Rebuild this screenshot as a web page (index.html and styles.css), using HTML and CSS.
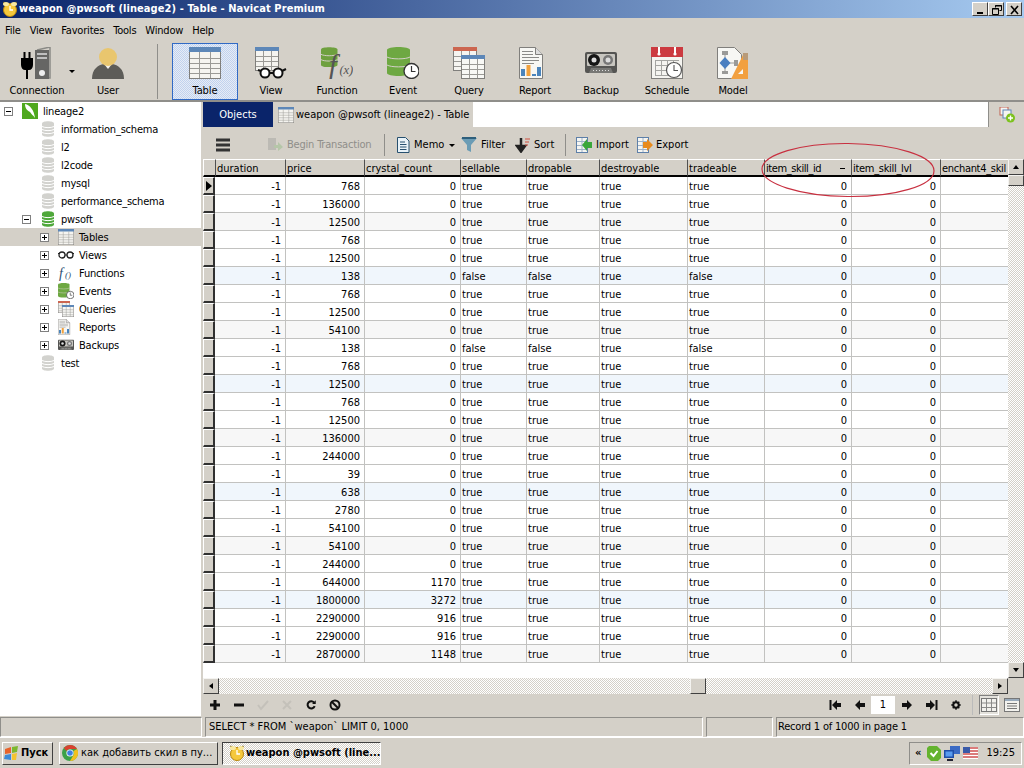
FILE: index.html
```html
<!DOCTYPE html>
<html lang="en">
<head>
<meta charset="utf-8">
<title>weapon @pwsoft (lineage2) - Table - Navicat Premium</title>
<link rel="stylesheet" href="styles.css">
</head>
<body>
<svg class="defs" width="0" height="0" aria-hidden="true">
  <defs>
    <symbol id="i-table" viewBox="0 0 32 32"><rect x=".5" y=".5" width="31" height="31" fill="#f5f4f0" stroke="#807f7c"/><rect x="0" y="0" width="32" height="5" fill="#5d87b8"/><path d="M1 11.5h30M1 16.5h30M1 21.5h30M1 26.5h30M10.5 5v26M21.500 5v26" stroke="#9b9a96" fill="none"/></symbol>
    <symbol id="i-view" viewBox="0 0 32 32"><rect x=".5" y=".5" width="23" height="23" fill="#f5f4f0" stroke="#807f7c"/><rect width="24" height="4" fill="#5d87b8"/><path d="M1 9.500h22M1 14.500h22M1 19.500h22M8.500 4v20M16.500 4v20" stroke="#9b9a96" fill="none"/><circle cx="10" cy="26" r="4.500" fill="#fff" stroke="#111" stroke-width="2"/><circle cx="23" cy="26" r="4.500" fill="#fff" stroke="#111" stroke-width="2"/><path d="M3 23l3 1M14 26h5M27 24l4-2" stroke="#111" stroke-width="2" fill="none"/></symbol>
    <symbol id="i-func" viewBox="0 0 33 32"><path d="M0 2c0-3 17-3 17 0v16c0 3-17 3-17 0z" fill="#6ea03e"/><path d="M0 7c3 2 14 2 17 0M0 12.500c3 2 14 2 17 0" stroke="#d4d0c8" fill="none"/><text x="8" y="28" class="fx">f</text><text x="19" y="27" class="fxs">(x)</text></symbol>
    <symbol id="i-event" viewBox="0 0 32 32"><path d="M0 3c0-4 23-4 23 0v23c0 4-23 4-23 0z" fill="#6ea842"/><path d="M0 10c4 2.500 19 2.500 23 0M0 18c4 2.500 19 2.500 23 0" stroke="#d4d0c8" fill="none"/><circle cx="24.500" cy="24" r="7.500" fill="#fff" stroke="#333" stroke-width="1.300"/><path d="M24.500 19v5.500h4" stroke="#333" fill="none" stroke-width="1.200"/></symbol>
    <symbol id="i-query" viewBox="0 0 32 32"><rect x=".5" y=".5" width="23" height="23" fill="#f5f4f0" stroke="#807f7c"/><rect width="24" height="4" fill="#cc6650"/><path d="M1 9.500h8M1 14.500h8M1 19.500h8M8.500 4v18M16.500 4v4" stroke="#9b9a96"/><rect x="8.500" y="8.500" width="23" height="23" fill="#f8f8f5" stroke="#807f7c"/><rect x="8" y="8" width="24" height="4" fill="#5d87b8"/><path d="M9 17.500h22M9 22.500h22M9 27.500h22M16.500 12v19M24.500 12v19" stroke="#9b9a96" fill="none"/></symbol>
    <symbol id="i-report" viewBox="0 0 32 32"><path d="M.5.500h16l7 7v24H.5z" fill="#f7f7f4" stroke="#807f7c"/><path d="M16.500.5v7h7" fill="#ddd" stroke="#807f7c"/><path d="M3 4.500h11M3 7.500h11M3 10.500h17M3 13.500h17M3 16.500h12" stroke="#8a8a88"/><rect x="2" y="22" width="4" height="7" fill="#4a84bc"/><rect x="7.500" y="18" width="4" height="11" fill="#f2a13c"/><rect x="13" y="27" width="4" height="2" fill="#4a84bc"/><rect x="18" y="20" width="4" height="9" fill="#4a84bc"/></symbol>
    <symbol id="i-backup" viewBox="0 0 32 22"><rect x="0" y="0" width="32" height="21" rx="2" fill="#555553"/><path d="M4 21l2-5h20l2 5z" fill="#787875"/><rect x="2" y="2" width="28" height="12" fill="#c8c6c0" rx="1"/><circle cx="9" cy="8" r="6" fill="#151515"/><circle cx="9" cy="8" r="2.500" fill="#ddd"/><circle cx="23" cy="8" r="5" fill="#777"/><circle cx="23" cy="8" r="2.500" fill="#ddd"/><path d="M8 18.500h16" stroke="#ddd" stroke-dasharray="1 2"/></symbol>
    <symbol id="i-sched" viewBox="0 0 32 32"><rect x=".5" y=".5" width="31" height="31" fill="#f5f4f0" stroke="#807f7c"/><rect width="32" height="10" fill="#cc3a40"/><path d="M8 0v7M24 0v7" stroke="#fff" stroke-width="2"/><circle cx="8" cy="7" r="1.600" fill="#fff"/><circle cx="24" cy="7" r="1.600" fill="#fff"/><path d="M4 13.500h24M4 18.500h24M4 23.500h24M4 28.500h24M4.500 13v16M10.500 13v16M16.500 13v16M22.500 13v16" stroke="#a5a5a2" fill="none"/><circle cx="23" cy="23" r="7.500" fill="#fff" stroke="#555" stroke-width="1.200"/><path d="M23 18v5.500h4" stroke="#555" fill="none" stroke-width="1.100"/></symbol>
    <symbol id="i-model" viewBox="0 0 32 32"><path d="M.5.500h17l7 7v24H.5z" fill="#f7f7f4" stroke="#807f7c"/><rect x="5" y="4" width="6" height="4" fill="#9a9a98"/><rect x="5" y="24" width="6" height="3" fill="#9a9a98"/><rect x="17" y="13" width="4" height="6" fill="#9a9a98"/><path d="M8 8v16M12 16h6" stroke="#9a9a98"/><path d="M8 10l5.500 6-5.500 6-5.500-6z" fill="#4a7fc0"/><path d="M27 6h4v26H14z" fill="#f2a03f"/><path d="M26 22v5h-5z" fill="#f7f7f4"/><rect x="26" y="6" width="5" height="7" fill="#b89a78"/></symbol>
    <symbol id="i-db" viewBox="0 0 16 16"><path d="M2 2.500c0-3 12-3 12 0v11c0 3-12 3-12 0z" fill="currentColor"/><path d="M2 5.500c3 1.500 9 1.500 12 0M2 8.500c3 1.500 9 1.500 12 0M2 11.500c3 1.500 9 1.500 12 0" stroke="#fff" fill="none"/></symbol>
    <symbol id="i-fn" viewBox="0 0 16 16"><text x="1" y="13" class="fxsm">f</text><text x="7" y="13" class="fxxs">()</text></symbol>
    <symbol id="i-sql" viewBox="0 0 16 16"><rect width="16" height="16" fill="#4fa81e"/><path d="M3 1c5 1 9 6 10 14-2-3-4-4-5-6-2-1-5-3-5-8z" fill="#fff"/></symbol>
    <symbol id="i-clock" viewBox="0 0 16 16"><path d="M4 3L1.500 1M12 3l2.500-2" stroke="#6b4e00" stroke-width="1.500"/><circle cx="8" cy="9" r="6.500" fill="#f5c83c" stroke="#b8860b"/><ellipse cx="4" cy="3" rx="3" ry="2" fill="#f8e8a0"/><ellipse cx="12" cy="3" rx="3" ry="2" fill="#f8e8a0"/><path d="M8 5v4h3" stroke="#fff" stroke-width="1.300" fill="none"/></symbol>
    <symbol id="i-memo" viewBox="0 0 16 16"><path d="M2.500.5h8l3.500 3.500v11.500H2.500z" fill="#e8f2f8" stroke="#27506f"/><path d="M5 5h5M5 7.500h6.500M5 10h6.500M5 12.500h6.500" stroke="#27506f"/></symbol>
    <symbol id="i-filter" viewBox="0 0 16 16"><path d="M0 1h16l-6 7v7l-4-2V8z" fill="#6b9cb5"/><path d="M1 1h14" stroke="#2e5f7c" stroke-width="2"/></symbol>
    <symbol id="i-sort" viewBox="0 0 16 16"><path d="M6 1v11M2 9l4 5.500L10 9z" stroke="#222" stroke-width="2.500" fill="#222"/><path d="M10 2h5M10 5h4M10 8h3" stroke="#d05040"/></symbol>
    <symbol id="i-import" viewBox="0 0 16 16"><rect x=".5" y=".5" width="11" height="15" fill="#f5f5f2" stroke="#5d7fa8"/><path d="M1 4.500h10M1 8.500h10M1 12.500h10M6 1v14" stroke="#9fb2c8"/><path d="M16 5v6h-5v3L6 8l5-6v3z" fill="#3aa63a"/></symbol>
    <symbol id="i-export" viewBox="0 0 16 16"><rect x=".5" y=".5" width="11" height="15" fill="#f5f5f2" stroke="#5d7fa8"/><path d="M1 4.500h10M1 8.500h10M1 12.500h10M6 1v14" stroke="#9fb2c8"/><path d="M6 5h4V2l6 6-6 6v-3H6z" fill="#e88a1c"/></symbol>
  </defs>
</svg>

<div class="app">
  <header class="titlebar">
    <svg class="ic16"><use href="#i-clock"/></svg>
    <span class="title-text">weapon @pwsoft (lineage2) - Table - Navicat Premium</span>
    <div class="winbtns">
      <button class="winbtn"><svg width="12" height="10"><rect x="2" y="7" width="6" height="2" fill="#000"/></svg></button>
      <button class="winbtn"><svg width="12" height="10"><path d="M4.500 2.500V.5h6v5H8.500M1.500 3.500h6v6h-6z" fill="none" stroke="#000"/><path d="M4 1h7M1 4h7" stroke="#000"/></svg></button>
      <button class="winbtn winbtn-close"><svg width="12" height="10"><path d="M2 1l7 8M9 1L2 9" stroke="#000" stroke-width="1.600"/></svg></button>
    </div>
  </header>

  <nav class="menubar">
    <span>File</span><span>View</span><span>Favorites</span><span>Tools</span><span>Window</span><span>Help</span>
  </nav>

  <div class="toolbar">
    <div class="tool tool-first">
      <svg class="ic32" viewBox="0 0 32 32"><path d="M16 3l13-3v31h-6" fill="none" stroke="#8a8a86" stroke-width="1.500"/><rect x="14" y="3" width="14" height="29" fill="#666664"/><path d="M16 7h10M16 11h10" stroke="#ddd" stroke-width="1.500"/><circle cx="21" cy="26" r="3" fill="#eee"/><path d="M0 11h12v7c0 3-2 5-4 5H4c-2 0-4-2-4-5z" fill="#000"/><rect x="2.500" y="5" width="2" height="6" fill="#000"/><rect x="7.500" y="5" width="2" height="6" fill="#000"/><rect x="5" y="22" width="2" height="10" fill="#000"/></svg>
      <span>Connection</span>
    </div>
    <i class="tool-arrow"></i>
    <div class="tool">
      <svg class="ic32" viewBox="0 0 32 32"><path d="M0 32c0-10 6-14 12-15h8c6 1 12 5 12 15z" fill="#5d5c58"/><path d="M12 17l4 5 4-5z" fill="#f4f2ea"/><circle cx="16" cy="10" r="9" fill="#e9c66e"/></svg>
      <span>User</span>
    </div>
    <i class="tool-sep"></i>
    <div class="tool tool-active"><svg class="ic32"><use href="#i-table"/></svg><span>Table</span></div>
    <div class="tool"><svg class="ic32"><use href="#i-view"/></svg><span>View</span></div>
    <div class="tool"><svg class="ic32"><use href="#i-func"/></svg><span>Function</span></div>
    <div class="tool"><svg class="ic32"><use href="#i-event"/></svg><span>Event</span></div>
    <div class="tool"><svg class="ic32"><use href="#i-query"/></svg><span>Query</span></div>
    <div class="tool"><svg class="ic32"><use href="#i-report"/></svg><span>Report</span></div>
    <div class="tool"><svg class="ic32"><use href="#i-backup"/></svg><span>Backup</span></div>
    <div class="tool"><svg class="ic32"><use href="#i-sched"/></svg><span>Schedule</span></div>
    <div class="tool"><svg class="ic32"><use href="#i-model"/></svg><span>Model</span></div>
  </div>

  <main class="main">
    <aside class="tree">
      <div class="node n0"><i class="exp minus"></i><svg class="ic16"><use href="#i-sql"/></svg><span>lineage2</span></div>
      <div class="node n1 off"><svg class="ic16"><use href="#i-db"/></svg><span>information_schema</span></div>
      <div class="node n1 off"><svg class="ic16"><use href="#i-db"/></svg><span>l2</span></div>
      <div class="node n1 off"><svg class="ic16"><use href="#i-db"/></svg><span>l2code</span></div>
      <div class="node n1 off"><svg class="ic16"><use href="#i-db"/></svg><span>mysql</span></div>
      <div class="node n1 off"><svg class="ic16"><use href="#i-db"/></svg><span>performance_schema</span></div>
      <div class="node n0b on"><i class="exp minus"></i><svg class="ic16"><use href="#i-db"/></svg><span>pwsoft</span></div>
      <div class="node n2 sel"><i class="exp plus"></i><svg class="ic16"><use href="#i-table"/></svg><span>Tables</span></div>
      <div class="node n2"><i class="exp plus"></i><svg class="ic16" viewBox="0 0 16 16"><circle cx="4" cy="8" r="3" fill="none" stroke="#222" stroke-width="1.300"/><circle cx="12" cy="8" r="3" fill="none" stroke="#222" stroke-width="1.300"/><path d="M7 8h2M0 6l1 1M16 6l-1 1" stroke="#222"/></svg><span>Views</span></div>
      <div class="node n2"><i class="exp plus"></i><svg class="ic16"><use href="#i-fn"/></svg><span>Functions</span></div>
      <div class="node n2"><i class="exp plus"></i><svg class="ic16"><use href="#i-event"/></svg><span>Events</span></div>
      <div class="node n2"><i class="exp plus"></i><svg class="ic16"><use href="#i-query"/></svg><span>Queries</span></div>
      <div class="node n2"><i class="exp plus"></i><svg class="ic16"><use href="#i-report"/></svg><span>Reports</span></div>
      <div class="node n2"><i class="exp plus"></i><svg class="ic16" viewBox="0 0 32 22"><use href="#i-backup"/></svg><span>Backups</span></div>
      <div class="node n1 off"><svg class="ic16"><use href="#i-db"/></svg><span>test</span></div>
    </aside>

    <section class="pane">
      <div class="tabs">
        <div class="tab-objects">Objects</div>
        <div class="tab-doc"><svg class="ic16"><use href="#i-table"/></svg><span>weapon @pwsoft (lineage2) - Table</span></div>
        <div class="tab-fill"></div>
        <div class="tab-add"><svg class="ic16" viewBox="0 0 16 16"><rect x="1" y="0" width="8" height="8" fill="#f5f5f2" stroke="#c06050"/><rect x="4" y="3" width="8" height="8" fill="#f5f5f2" stroke="#5d87b8"/><circle cx="11.500" cy="11" r="4.500" fill="#7cc21e"/><path d="M11.500 8.500v5M9 11h5" stroke="#fff" stroke-width="1.400"/></svg></div>
      </div>

      <div class="subbar">
        <svg class="burger" width="14" height="14" viewBox="0 0 14 14"><path d="M0 2h14M0 7h14M0 12h14" stroke="#333" stroke-width="2.800" stroke-linecap="round"/></svg>
        <div class="sub sub-begin dim"><svg class="ic16" viewBox="0 0 16 16"><rect x="1" y="1" width="8" height="12" fill="#bcbab4"/><path d="M7 8h4V5l5 5-5 4v-3H7z" fill="#b5c6a8"/></svg><span>Begin Transaction</span></div>
        <i class="sub-sep sep-a"></i>
        <div class="sub sub-memo"><svg class="ic16"><use href="#i-memo"/></svg><span>Memo</span><i class="mini-arrow"></i></div>
        <div class="sub sub-filter"><svg class="ic16"><use href="#i-filter"/></svg><span>Filter</span></div>
        <div class="sub sub-sort"><svg class="ic16"><use href="#i-sort"/></svg><span>Sort</span></div>
        <i class="sub-sep sep-b"></i>
        <div class="sub sub-import"><svg class="ic16"><use href="#i-import"/></svg><span>Import</span></div>
        <div class="sub sub-export"><svg class="ic16"><use href="#i-export"/></svg><span>Export</span></div>
      </div>

      <div class="gridarea">
        <div class="gridview">
          <table class="grid">
            <colgroup><col class="c0"><col class="c1"><col class="c2"><col class="c3"><col class="c4"><col class="c5"><col class="c6"><col class="c7"><col class="c8"><col class="c9"><col></colgroup>
            <thead><tr><th class="rh"></th><th>duration</th><th>price</th><th>crystal_count</th><th>sellable</th><th>dropable</th><th>destroyable</th><th>tradeable</th><th class="sorted tight">item_skill_id<i class="sortmark"></i></th><th class="tight2">item_skill_lvl</th><th class="tight2">enchant4_skil</th></tr></thead>
            <tbody>
              <tr><td class="rh"><i class="cursor"></i></td><td class="n">-1</td><td class="n">768</td><td class="n">0</td><td>true</td><td>true</td><td>true</td><td>true</td><td class="n">0</td><td class="n">0</td><td></td></tr>
              <tr><td class="rh"></td><td class="n">-1</td><td class="n">136000</td><td class="n">0</td><td>true</td><td>true</td><td>true</td><td>true</td><td class="n">0</td><td class="n">0</td><td></td></tr>
              <tr class="gray"><td class="rh"></td><td class="n">-1</td><td class="n">12500</td><td class="n">0</td><td>true</td><td>true</td><td>true</td><td>true</td><td class="n">0</td><td class="n">0</td><td></td></tr>
              <tr><td class="rh"></td><td class="n">-1</td><td class="n">768</td><td class="n">0</td><td>true</td><td>true</td><td>true</td><td>true</td><td class="n">0</td><td class="n">0</td><td></td></tr>
              <tr><td class="rh"></td><td class="n">-1</td><td class="n">12500</td><td class="n">0</td><td>true</td><td>true</td><td>true</td><td>true</td><td class="n">0</td><td class="n">0</td><td></td></tr>
              <tr class="blue"><td class="rh"></td><td class="n">-1</td><td class="n">138</td><td class="n">0</td><td>false</td><td>false</td><td>true</td><td>false</td><td class="n">0</td><td class="n">0</td><td></td></tr>
              <tr><td class="rh"></td><td class="n">-1</td><td class="n">768</td><td class="n">0</td><td>true</td><td>true</td><td>true</td><td>true</td><td class="n">0</td><td class="n">0</td><td></td></tr>
              <tr><td class="rh"></td><td class="n">-1</td><td class="n">12500</td><td class="n">0</td><td>true</td><td>true</td><td>true</td><td>true</td><td class="n">0</td><td class="n">0</td><td></td></tr>
              <tr class="gray"><td class="rh"></td><td class="n">-1</td><td class="n">54100</td><td class="n">0</td><td>true</td><td>true</td><td>true</td><td>true</td><td class="n">0</td><td class="n">0</td><td></td></tr>
              <tr><td class="rh"></td><td class="n">-1</td><td class="n">138</td><td class="n">0</td><td>false</td><td>false</td><td>true</td><td>false</td><td class="n">0</td><td class="n">0</td><td></td></tr>
              <tr><td class="rh"></td><td class="n">-1</td><td class="n">768</td><td class="n">0</td><td>true</td><td>true</td><td>true</td><td>true</td><td class="n">0</td><td class="n">0</td><td></td></tr>
              <tr class="blue"><td class="rh"></td><td class="n">-1</td><td class="n">12500</td><td class="n">0</td><td>true</td><td>true</td><td>true</td><td>true</td><td class="n">0</td><td class="n">0</td><td></td></tr>
              <tr><td class="rh"></td><td class="n">-1</td><td class="n">768</td><td class="n">0</td><td>true</td><td>true</td><td>true</td><td>true</td><td class="n">0</td><td class="n">0</td><td></td></tr>
              <tr><td class="rh"></td><td class="n">-1</td><td class="n">12500</td><td class="n">0</td><td>true</td><td>true</td><td>true</td><td>true</td><td class="n">0</td><td class="n">0</td><td></td></tr>
              <tr class="gray"><td class="rh"></td><td class="n">-1</td><td class="n">136000</td><td class="n">0</td><td>true</td><td>true</td><td>true</td><td>true</td><td class="n">0</td><td class="n">0</td><td></td></tr>
              <tr><td class="rh"></td><td class="n">-1</td><td class="n">244000</td><td class="n">0</td><td>true</td><td>true</td><td>true</td><td>true</td><td class="n">0</td><td class="n">0</td><td></td></tr>
              <tr><td class="rh"></td><td class="n">-1</td><td class="n">39</td><td class="n">0</td><td>true</td><td>true</td><td>true</td><td>true</td><td class="n">0</td><td class="n">0</td><td></td></tr>
              <tr class="blue"><td class="rh"></td><td class="n">-1</td><td class="n">638</td><td class="n">0</td><td>true</td><td>true</td><td>true</td><td>true</td><td class="n">0</td><td class="n">0</td><td></td></tr>
              <tr><td class="rh"></td><td class="n">-1</td><td class="n">2780</td><td class="n">0</td><td>true</td><td>true</td><td>true</td><td>true</td><td class="n">0</td><td class="n">0</td><td></td></tr>
              <tr><td class="rh"></td><td class="n">-1</td><td class="n">54100</td><td class="n">0</td><td>true</td><td>true</td><td>true</td><td>true</td><td class="n">0</td><td class="n">0</td><td></td></tr>
              <tr class="gray"><td class="rh"></td><td class="n">-1</td><td class="n">54100</td><td class="n">0</td><td>true</td><td>true</td><td>true</td><td>true</td><td class="n">0</td><td class="n">0</td><td></td></tr>
              <tr><td class="rh"></td><td class="n">-1</td><td class="n">244000</td><td class="n">0</td><td>true</td><td>true</td><td>true</td><td>true</td><td class="n">0</td><td class="n">0</td><td></td></tr>
              <tr><td class="rh"></td><td class="n">-1</td><td class="n">644000</td><td class="n">1170</td><td>true</td><td>true</td><td>true</td><td>true</td><td class="n">0</td><td class="n">0</td><td></td></tr>
              <tr class="blue"><td class="rh"></td><td class="n">-1</td><td class="n">1800000</td><td class="n">3272</td><td>true</td><td>true</td><td>true</td><td>true</td><td class="n">0</td><td class="n">0</td><td></td></tr>
              <tr><td class="rh"></td><td class="n">-1</td><td class="n">2290000</td><td class="n">916</td><td>true</td><td>true</td><td>true</td><td>true</td><td class="n">0</td><td class="n">0</td><td></td></tr>
              <tr><td class="rh"></td><td class="n">-1</td><td class="n">2290000</td><td class="n">916</td><td>true</td><td>true</td><td>true</td><td>true</td><td class="n">0</td><td class="n">0</td><td></td></tr>
              <tr class="gray"><td class="rh"></td><td class="n">-1</td><td class="n">2870000</td><td class="n">1148</td><td>true</td><td>true</td><td>true</td><td>true</td><td class="n">0</td><td class="n">0</td><td></td></tr>
            </tbody>
          </table>
          <svg class="ellipse" width="190" height="70" viewBox="0 0 190 70"><ellipse cx="93" cy="35" rx="86" ry="26.500" transform="rotate(0.600 93 35)" fill="none" stroke="#c83040" stroke-width="1.200"/></svg>
        </div>
        <div class="vscroll">
          <button class="sbtn"><i class="tri tri-up"></i></button>
          <div class="vthumb"></div>
          <div class="track"></div>
          <button class="sbtn"><i class="tri tri-down"></i></button>
        </div>
        <div class="hscroll">
          <button class="sbtn"><i class="tri tri-left"></i></button>
          <div class="track htrack-a"></div>
          <div class="hthumb"></div>
          <div class="track htrack-b"></div>
          <button class="sbtn"><i class="tri tri-right"></i></button>
        </div>
      </div>

      <div class="navbar">
        <div class="nav-left">
          <svg width="16" height="16" viewBox="0 0 16 16"><path d="M8 3v10M3 8h10" stroke="#111" stroke-width="3"/></svg>
          <svg width="16" height="16" viewBox="0 0 16 16"><path d="M3 8h10" stroke="#111" stroke-width="3"/></svg>
          <svg width="16" height="16" viewBox="0 0 16 16"><path d="M3 8l3 4 7-8" stroke="#c4c1ba" stroke-width="2" fill="none"/></svg>
          <svg width="16" height="16" viewBox="0 0 16 16"><path d="M4 4l8 8M12 4l-8 8" stroke="#c4c1ba" stroke-width="2"/></svg>
          <svg width="16" height="16" viewBox="-3 -3 22 22"><path d="M12.500 5A5 5 0 1 0 13 9.500" fill="none" stroke="#111" stroke-width="2.800"/><path d="M9.500 6.500h5v-5z" fill="#111"/></svg>
          <svg width="16" height="16" viewBox="0 0 16 16"><circle cx="8" cy="8" r="4.500" fill="none" stroke="#111" stroke-width="2"/><path d="M5 5l6 6" stroke="#111" stroke-width="2"/></svg>
        </div>
        <div class="nav-right">
          <svg width="16" height="16" viewBox="0 0 16 16"><path d="M3.500 3v10" stroke="#111" stroke-width="2"/><path d="M5 8l5-5v3h4v4h-4v3z" fill="#111"/></svg>
          <svg width="16" height="16" viewBox="0 0 16 16"><path d="M3 8l5-5v3h5v4H8v3z" fill="#111"/></svg>
          <div class="pageinput">1</div>
          <svg width="16" height="16" viewBox="0 0 16 16"><path d="M13 8L8 3v3H3v4h5v3z" fill="#111"/></svg>
          <svg width="16" height="16" viewBox="0 0 16 16"><path d="M12.500 3v10" stroke="#111" stroke-width="2"/><path d="M11 8L6 3v3H2v4h4v3z" fill="#111"/></svg>
          <svg width="16" height="16" viewBox="-3 -3 22 22"><circle cx="8" cy="8" r="3.800" fill="none" stroke="#111" stroke-width="2.800"/><path d="M8 1.500v3M8 11.500v3M1.500 8h3M11.500 8h3M3.500 3.500l2 2M10.500 10.500l2 2M3.500 12.500l2-2M10.500 5.500l2-2" stroke="#111" stroke-width="2"/></svg>
          <i class="nav-sep"></i>
          <div class="viewbtn viewbtn-on"><svg width="16" height="14" viewBox="0 0 16 14"><rect x=".5" y=".5" width="15" height="13" fill="#f2f1ed" stroke="#777"/><path d="M1 5h14M1 9.500h14M5.500 1v12M10.500 1v12" stroke="#8a8a88"/></svg></div>
          <div class="viewbtn"><svg width="16" height="14" viewBox="0 0 16 14"><rect x=".5" y=".5" width="15" height="13" fill="#f2f1ed" stroke="#777"/><rect x="1" y="1" width="14" height="2" fill="#9ab"/><path d="M3 5.500h10M3 8h10M3 10.500h10" stroke="#777"/></svg></div>
        </div>
      </div>
    </section>
  </main>

  <footer class="status">
    <div class="st st-a"></div>
    <div class="st st-b">SELECT * FROM `weapon` LIMIT 0, 1000</div>
    <div class="st st-c"></div>
    <div class="st st-d">Record 1 of 1000 in page 1</div>
  </footer>

  <div class="taskbar">
    <button class="start">
      <svg class="ic16" viewBox="0 0 16 16"><path d="M1 4l6-2v6l-6 1z" fill="#e8622a"/><path d="M8 2l6-1-1 6-5 1z" fill="#7cb82f"/><path d="M1 10l6-1v6l-7-1z" fill="#3c8ad8"/><path d="M8 9l5-1-1 7-4 0z" fill="#f4c430"/></svg>
      <span>Пуск</span>
    </button>
    <button class="task task-chrome">
      <svg class="ic16" viewBox="0 0 16 16"><circle cx="8" cy="8" r="8" fill="#3da14a"/><path d="M8 0a8 8 0 0 1 7 4H8a4 4 0 0 0-3.500 2L1.800 3A8 8 0 0 1 8 0z" fill="#d9412f"/><path d="M15 4a8 8 0 0 1-7 12l3.500-6A4 4 0 0 0 11.500 6z" fill="#f2c01e"/><circle cx="8" cy="8" r="3.600" fill="#fff"/><circle cx="8" cy="8" r="2.800" fill="#3f7fe0"/></svg>
      <span class="task-label">как добавить скил в пу...</span>
    </button>
    <button class="task task-on">
      <svg class="ic16"><use href="#i-clock"/></svg>
      <span class="task-label">weapon @pwsoft (line...</span>
    </button>
    <div class="tray">
      <span class="tray-chev">«</span>
      <svg class="ic16" viewBox="0 0 16 16"><path d="M3 1h8l4 4v8l-3 3H5l-4-4V3z" fill="#63b32e"/><path d="M4.500 8l3 3 4-5" stroke="#fff" stroke-width="2" fill="none"/></svg>
      <svg class="ic16" viewBox="0 0 16 16"><rect x="6" y="1" width="10" height="8" fill="#3c6bc4"/><rect x="0" y="5" width="10" height="8" fill="#1f4ea8"/><rect x="1.500" y="6.500" width="7" height="5" fill="#5a9cf0"/><path d="M3 15h6" stroke="#223" stroke-width="2"/></svg>
      <svg class="ic16" viewBox="0 0 16 16"><rect x="1" y="2" width="15" height="12" fill="#fff"/><path d="M1 3h15M1 6h15M1 9h15M1 12h15" stroke="#d05050" stroke-width="1.400"/><rect x="1" y="2" width="7" height="6" fill="#3a5aa8"/></svg>
      <span class="clock">19:25</span>
    </div>
  </div>
</div>
</body>
</html>
```

FILE: styles.css
```css
* { box-sizing: border-box; }
html, body { margin: 0; padding: 0; }
body {
  width: 1024px;
  height: 768px;
  overflow: hidden;
  background: #d4d0c8;
  color: #000;
  font: 11px/14px "DejaVu Sans Condensed", "DejaVu Sans", sans-serif;
}
.defs { position: absolute; }
.app { display: flex; flex-direction: column; height: 768px; }
svg { display: block; flex: none; }
.ic16 { width: 16px; height: 16px; }
.ic32 { width: 32px; height: 32px; }
.fx { font: italic 30px "Liberation Serif", serif; fill: #555; }
.fxs { font: italic 13px "Liberation Serif", serif; fill: #555; }
.fxsm { font: italic 14px "Liberation Serif", serif; fill: #2a4e70; }
.fxxs { font: italic 9px "Liberation Serif", serif; fill: #2a4e70; }

/* title */
.titlebar {
  flex: none;
  height: 18px;
  display: flex;
  align-items: center;
  padding: 0 2px;
  gap: 1px;
  background: linear-gradient(90deg, #0a246a, #a6caf0);
}
.title-text { color: #fff; font-weight: bold; letter-spacing: 0.08px; }
.winbtns { margin-left: auto; display: flex; }
.winbtn {
  width: 16px;
  height: 14px;
  padding: 1px 0 0 1px;
  background: #d4d0c8;
  border: 1px solid;
  border-color: #fff #404040 #404040 #fff;
  display: flex;
  align-items: center;
  justify-content: center;
}
.winbtn-close { margin-left: 2px; }

/* menu */
.menubar {
  flex: none;
  height: 25px;
  display: flex;
  align-items: center;
  padding: 1px 0 0 5px;
  gap: 9px;
  letter-spacing: -0.2px;
}

/* toolbar */
.toolbar {
  flex: none;
  height: 59px;
  display: flex;
  align-items: flex-start;
  padding-left: 4px;
  border-bottom: 2px solid #8f8e8a;
}
.tool {
  width: 66px;
  height: 57px;
  display: flex;
  flex-direction: column;
  align-items: center;
  padding-top: 4px;
  gap: 5px;
  border: 1px solid transparent;
  letter-spacing: -0.1px;
}
.tool svg { margin-top: -1px; }
.tool-arrow {
  width: 0;
  height: 0;
  flex: none;
  margin: 27px 0 0 -1px;
  border: 3px solid transparent;
  border-top: 3px solid #000;
  border-bottom: 0;
}
.tool-sep {
  width: 1px;
  height: 55px;
  margin: 1px 14px 0 16px;
  background: #8f8e8a;
  flex: none;
}
.tool-active {
  border-color: #316ac5;
  background: repeating-conic-gradient(#c1d2ee 0 25%, #e6ecf6 0 50%) 0 0 / 2px 2px;
}

/* main */
.main { flex: 1; min-height: 0; display: flex; }
.tree {
  width: 201px;
  flex: none;
  background: #fff;
}
.node { height: 18px; display: flex; align-items: center; white-space: nowrap; }
.node span { margin-left: 5px; padding-top: 2px; letter-spacing: -0.2px; }
.n0 { padding-left: 4px; }
.n0b { padding-left: 22px; }
.n1 { padding-left: 40px; }
.n2 { padding-left: 40px; }
.sel { background: #d4d0c8; }
.off .ic16 { color: #d2d2ce; }
.on .ic16 { color: #4fa83a; }
.exp {
  position: relative;
  width: 9px;
  height: 9px;
  flex: none;
  margin-right: 9px;
  border: 1px solid #808080;
  background: #fff;
}
.exp::before {
  content: "";
  position: absolute;
  left: 1px; right: 1px; top: 3px;
  height: 1px;
  background: #000;
}
.plus::after {
  content: "";
  position: absolute;
  top: 1px; bottom: 1px; left: 3px;
  width: 1px;
  background: #000;
}

.pane { flex: 1; min-width: 0; margin-left: 2px; display: flex; flex-direction: column; }
.tabs { flex: none; height: 26px; display: flex; }
.tab-objects {
  width: 70px;
  height: 25px;
  background: #0a246a;
  color: #fff;
  display: flex;
  align-items: center;
  justify-content: center;
}
.tab-doc { width: 200px; display: flex; align-items: center; padding-left: 5px; gap: 2px; height: 25px; white-space: nowrap; }
.tab-fill { flex: 1; height: 25px; background: #fff; }
.tab-add {
  width: 36px;
  height: 25px;
  border-left: 1px solid #8f8e8a;
  display: flex;
  align-items: center;
  justify-content: center;
}

/* second toolbar */
.subbar { flex: none; height: 31px; display: flex; align-items: center; padding-top: 3px; }
.burger { margin-left: 13px; }
.sub { display: flex; align-items: center; gap: 4px; white-space: nowrap; flex: none; }
.dim { color: #8f8e8a; letter-spacing: -0.2px; }
.sub-begin { margin-left: 37px; width: 117px; }
.sub-sep { width: 1px; height: 22px; background: #8f8e8a; flex: none; }
.sep-a { margin: 0 10px 0 0; }
.sub-memo { width: 66px; gap: 3px; }
.mini-arrow { width: 0; height: 0; margin-left: auto; margin-right: 6px; border: 3px solid transparent; border-top-color: #000; border-bottom: 0; }
.sub-filter { width: 54px; gap: 4px; }
.sub-sort { width: 50px; gap: 3px; }
.sep-b { margin: 0 10px 0 0; }
.sub-import { width: 61px; gap: 4px; }
.sub-export { gap: 3px; }

/* grid */
.gridarea {
  flex: 1;
  min-height: 0;
  display: grid;
  grid-template-columns: 1fr 16px;
  grid-template-rows: 1fr 16px;
  background: #fff;
}
.gridview { position: relative; min-width: 0; min-height: 0; }
.grid {
  table-layout: fixed;
  border-collapse: separate;
  border-spacing: 0;
  width: 805px;
}
.c0 { width: 12px; }
.c1 { width: 70px; }
.c2 { width: 79px; }
.c3 { width: 96px; }
.c4 { width: 66px; }
.c5 { width: 73px; }
.c6 { width: 88px; }
.c7 { width: 77px; }
.c8 { width: 87px; }
.c9 { width: 89px; }
.grid th, .grid td {
  height: 18px;
  overflow: hidden;
  white-space: nowrap;
  font-weight: normal;
  text-align: left;
}
.grid th {
  background: #d4d0c8;
  border-top: 1px solid #fff;
  border-left: 1px solid #505050;
  border-bottom: 2px solid #000;
  padding: 3px 0 0 1px;
  line-height: 12px;
}
.grid .tight { letter-spacing: -0.4px; }
.grid .tight2 { letter-spacing: -0.3px; }
.grid td {
  border-left: 1px solid #c2c2c0;
  border-bottom: 1px solid #c2c2c0;
  padding: 2px 2px 0 1px;
}
.grid th.rh { border-left: 1px solid #fff; background: #d4d0c8; padding: 0; }
.grid td.rh {
  background: #d4d0c8;
  border-top: 1px solid #fff;
  border-left: 1px solid #fff;
  border-right: 2px solid #303030;
  border-bottom: 2px solid #303030;
  padding: 0;
  position: relative;
}
.grid td.rh + td { border-left: 0; }
.grid td.n { text-align: right; padding-right: 4px; }
.gray td { background: #f7f7f7; }
.blue td { background: #f0f6fc; }
.sorted { position: relative; }
.sortmark { position: absolute; right: 6px; top: 8px; width: 5px; height: 1px; background: #000; }
.cursor {
  position: absolute;
  left: 2px; top: 3px;
  width: 0; height: 0;
  border-left: 6px solid #000;
  border-top: 5px solid transparent;
  border-bottom: 5px solid transparent;
}
.ellipse { position: absolute; left: 552px; top: -24px; overflow: visible; pointer-events: none; }

/* scrollbars */
.vscroll { display: flex; flex-direction: column; grid-row: 1; grid-column: 2; }
.track { flex: 1; background: repeating-conic-gradient(#d4d0c8 0 25%, #fff 0 50%) 0 0 / 2px 2px; }
.sbtn, .vthumb, .hthumb {
  background: #d4d0c8;
  border: 1px solid;
  border-color: #f4f3f0 #404040 #404040 #f4f3f0;
  flex: none;
  padding: 0;
  display: flex;
  align-items: center;
  justify-content: center;
}
.sbtn { width: 16px; height: 16px; }
.vthumb { width: 16px; height: 11px; }
.hthumb { width: 16px; height: 16px; }
.hscroll { display: flex; grid-row: 2; grid-column: 1 / 3; padding-right: 16px; background: #d4d0c8; }
.htrack-a { flex: 0 0 471px; }
.tri { width: 0; height: 0; border: 3px solid transparent; display: block; }
.tri-up { border-top: 0; border-bottom: 4px solid #000; }
.tri-down { border-bottom: 0; border-top: 4px solid #000; }
.tri-left { border-left: 0; border-right: 4px solid #000; }
.tri-right { border-right: 0; border-left: 4px solid #000; }

/* nav */
.navbar { flex: none; height: 22px; display: flex; align-items: center; justify-content: space-between; }
.nav-left { display: flex; gap: 8px; padding-left: 4px; }
.nav-right { display: flex; align-items: center; gap: 3px; padding-right: 2px; }
.nav-right > svg { margin: 0 1px; }
.nav-right > svg:nth-child(1) { margin-right: 5px; }
.nav-right > svg:nth-child(2) { margin-right: 0; }
.nav-right > svg:nth-child(5) { margin-left: 5px; }
.nav-right > svg:nth-child(6) { margin-left: 4px; }
.pageinput { width: 24px; height: 18px; background: #fff; text-align: center; line-height: 18px; }
.nav-sep { width: 1px; height: 20px; background: #bbb; margin: 0 3px 0 4px; }
.viewbtn { width: 20px; height: 20px; display: flex; align-items: center; justify-content: center; }
.viewbtn-on { border: 1px solid; border-color: #808080 #fff #fff #808080; background: #e4e2dc; }

/* status */
.status { flex: none; height: 22px; display: flex; gap: 3px; padding: 1px 0; border-bottom: 1px solid #fff; }
.st {
  border: 1px solid;
  border-color: #8f8e8a #fff #fff #8f8e8a;
  height: 20px;
  padding-left: 2px;
  line-height: 17px;
  white-space: nowrap;
}
.st-a { width: 202px; }
.st-b { width: 498px; padding-left: 3px; }
.st-c { width: 67px; }
.st-d { flex: 1; padding-left: 1px; letter-spacing: -0.2px; }

/* taskbar */
.taskbar { flex: none; height: 30px; display: flex; align-items: center; padding: 0 2px; }
.start, .task {
  height: 23px;
  background: #d4d0c8;
  border: 1px solid;
  border-color: #fff #404040 #404040 #fff;
  display: flex;
  align-items: center;
  font: inherit;
  padding: 0 2px;
  gap: 3px;
  color: #000;
}
.start { width: 51px; font-weight: bold; gap: 1px; padding: 0 1px; }
.task { width: 159px; overflow: hidden; white-space: nowrap; }
.task-chrome { margin-left: 6px; }
.task-on {
  margin-left: 4px;
  padding-left: 6px;
  gap: 1px;
  font-weight: bold;
  border-color: #404040 #fff #fff #404040;
  background: repeating-conic-gradient(#d4d0c8 0 25%, #fff 0 50%) 0 0 / 2px 2px;
}
.tray {
  margin-left: auto;
  width: 113px;
  height: 23px;
  border: 1px solid;
  border-color: #8f8e8a #fff #fff #8f8e8a;
  display: flex;
  align-items: center;
  padding-left: 5px;
  gap: 2px;
}
.tray-chev { font-weight: bold; margin-right: 3px; }
.clock { margin-left: 6px; }
```
